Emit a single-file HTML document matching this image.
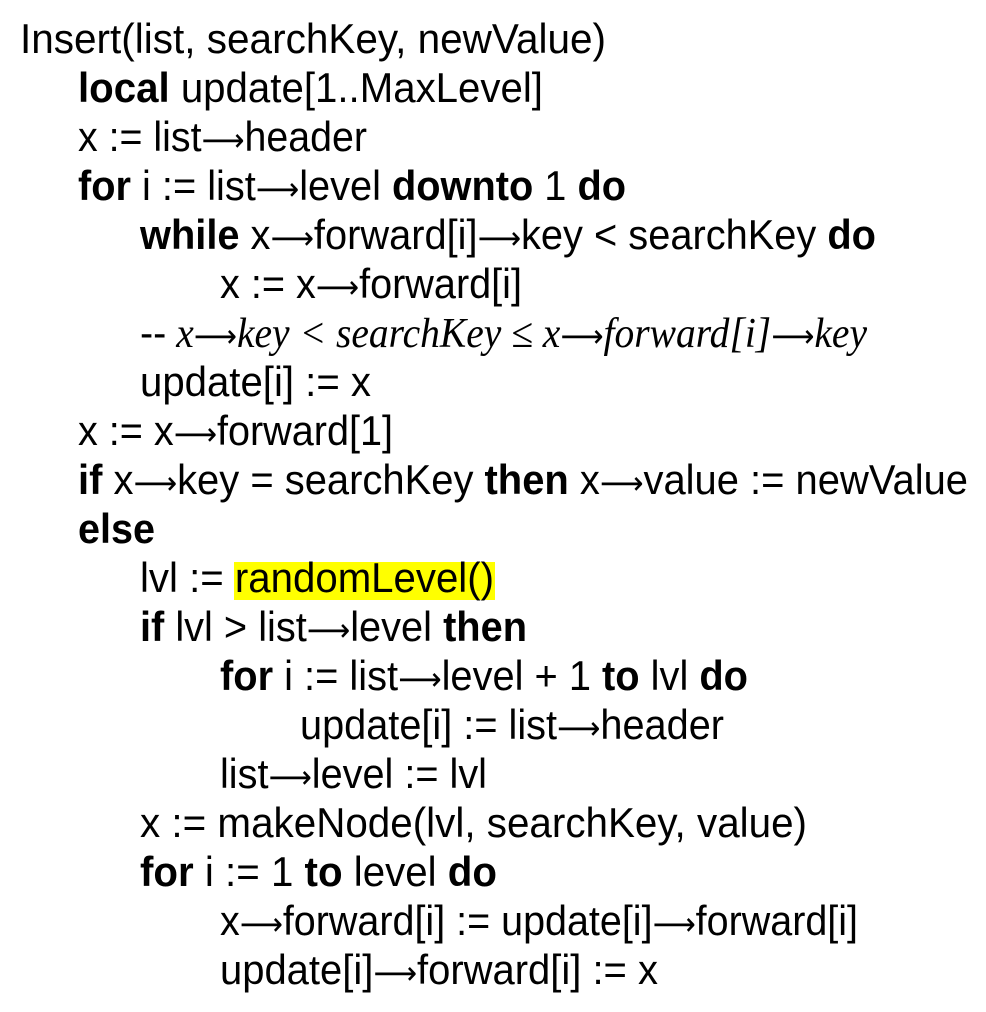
<!DOCTYPE html>
<html><head><meta charset="utf-8"><style>html,body{margin:0;padding:0;background:#fff;width:986px;height:1012px;overflow:hidden}
.a{font-family:"DejaVu Sans",sans-serif;font-style:normal;font-weight:normal;font-size:32px}</style></head>
<body>
<svg width="986" height="1012" xmlns="http://www.w3.org/2000/svg" font-family="Liberation Sans, Arial, sans-serif" font-size="42" fill="#000">
<rect x="234" y="562" width="261" height="38" fill="#ffff00"/>
<text x="20" y="53" textLength="586" lengthAdjust="spacingAndGlyphs">Insert(list, searchKey, newValue)</text>
<text x="78" y="102" textLength="465" lengthAdjust="spacingAndGlyphs"><tspan font-weight="bold">local</tspan> update[1..MaxLevel]</text>
<text x="78" y="151" textLength="289" lengthAdjust="spacingAndGlyphs">x := list<tspan class="a">⟶</tspan>header</text>
<text x="78" y="200" textLength="548" lengthAdjust="spacingAndGlyphs"><tspan font-weight="bold">for</tspan> i := list<tspan class="a">⟶</tspan>level <tspan font-weight="bold">downto</tspan> 1 <tspan font-weight="bold">do</tspan></text>
<text x="140" y="249" textLength="736" lengthAdjust="spacingAndGlyphs"><tspan font-weight="bold">while</tspan> x<tspan class="a">⟶</tspan>forward[i]<tspan class="a">⟶</tspan>key &lt; searchKey <tspan font-weight="bold">do</tspan></text>
<text x="220" y="298" textLength="302" lengthAdjust="spacingAndGlyphs">x := x<tspan class="a">⟶</tspan>forward[i]</text>
<text x="140" y="347" textLength="727" lengthAdjust="spacingAndGlyphs" font-family="Liberation Serif, serif" font-style="italic"><tspan font-family="Liberation Sans, sans-serif" font-style="normal">--</tspan> x<tspan class="a">⟶</tspan>key &lt; searchKey ≤ x<tspan class="a">⟶</tspan>forward[i]<tspan class="a">⟶</tspan>key</text>
<text x="140" y="396" textLength="231" lengthAdjust="spacingAndGlyphs">update[i] := x</text>
<text x="78" y="445" textLength="315" lengthAdjust="spacingAndGlyphs">x := x<tspan class="a">⟶</tspan>forward[1]</text>
<text x="78" y="494" textLength="890" lengthAdjust="spacingAndGlyphs"><tspan font-weight="bold">if</tspan> x<tspan class="a">⟶</tspan>key = searchKey <tspan font-weight="bold">then</tspan> x<tspan class="a">⟶</tspan>value := newValue</text>
<text x="78" y="543" textLength="77" lengthAdjust="spacingAndGlyphs" font-weight="bold">else</text>
<text x="140" y="592" textLength="354" lengthAdjust="spacingAndGlyphs">lvl := randomLevel()</text>
<text x="140" y="641" textLength="387" lengthAdjust="spacingAndGlyphs"><tspan font-weight="bold">if</tspan> lvl &gt; list<tspan class="a">⟶</tspan>level <tspan font-weight="bold">then</tspan></text>
<text x="220" y="690" textLength="528" lengthAdjust="spacingAndGlyphs"><tspan font-weight="bold">for</tspan> i := list<tspan class="a">⟶</tspan>level + 1 <tspan font-weight="bold">to</tspan> lvl <tspan font-weight="bold">do</tspan></text>
<text x="300" y="739" textLength="424" lengthAdjust="spacingAndGlyphs">update[i] := list<tspan class="a">⟶</tspan>header</text>
<text x="220" y="788" textLength="267" lengthAdjust="spacingAndGlyphs">list<tspan class="a">⟶</tspan>level := lvl</text>
<text x="140" y="837" textLength="667" lengthAdjust="spacingAndGlyphs">x := makeNode(lvl, searchKey, value)</text>
<text x="140" y="886" textLength="357" lengthAdjust="spacingAndGlyphs"><tspan font-weight="bold">for</tspan> i := 1 <tspan font-weight="bold">to</tspan> level <tspan font-weight="bold">do</tspan></text>
<text x="220" y="935" textLength="638" lengthAdjust="spacingAndGlyphs">x<tspan class="a">⟶</tspan>forward[i] := update[i]<tspan class="a">⟶</tspan>forward[i]</text>
<text x="220" y="984" textLength="438" lengthAdjust="spacingAndGlyphs">update[i]<tspan class="a">⟶</tspan>forward[i] := x</text>
</svg>
</body></html>
